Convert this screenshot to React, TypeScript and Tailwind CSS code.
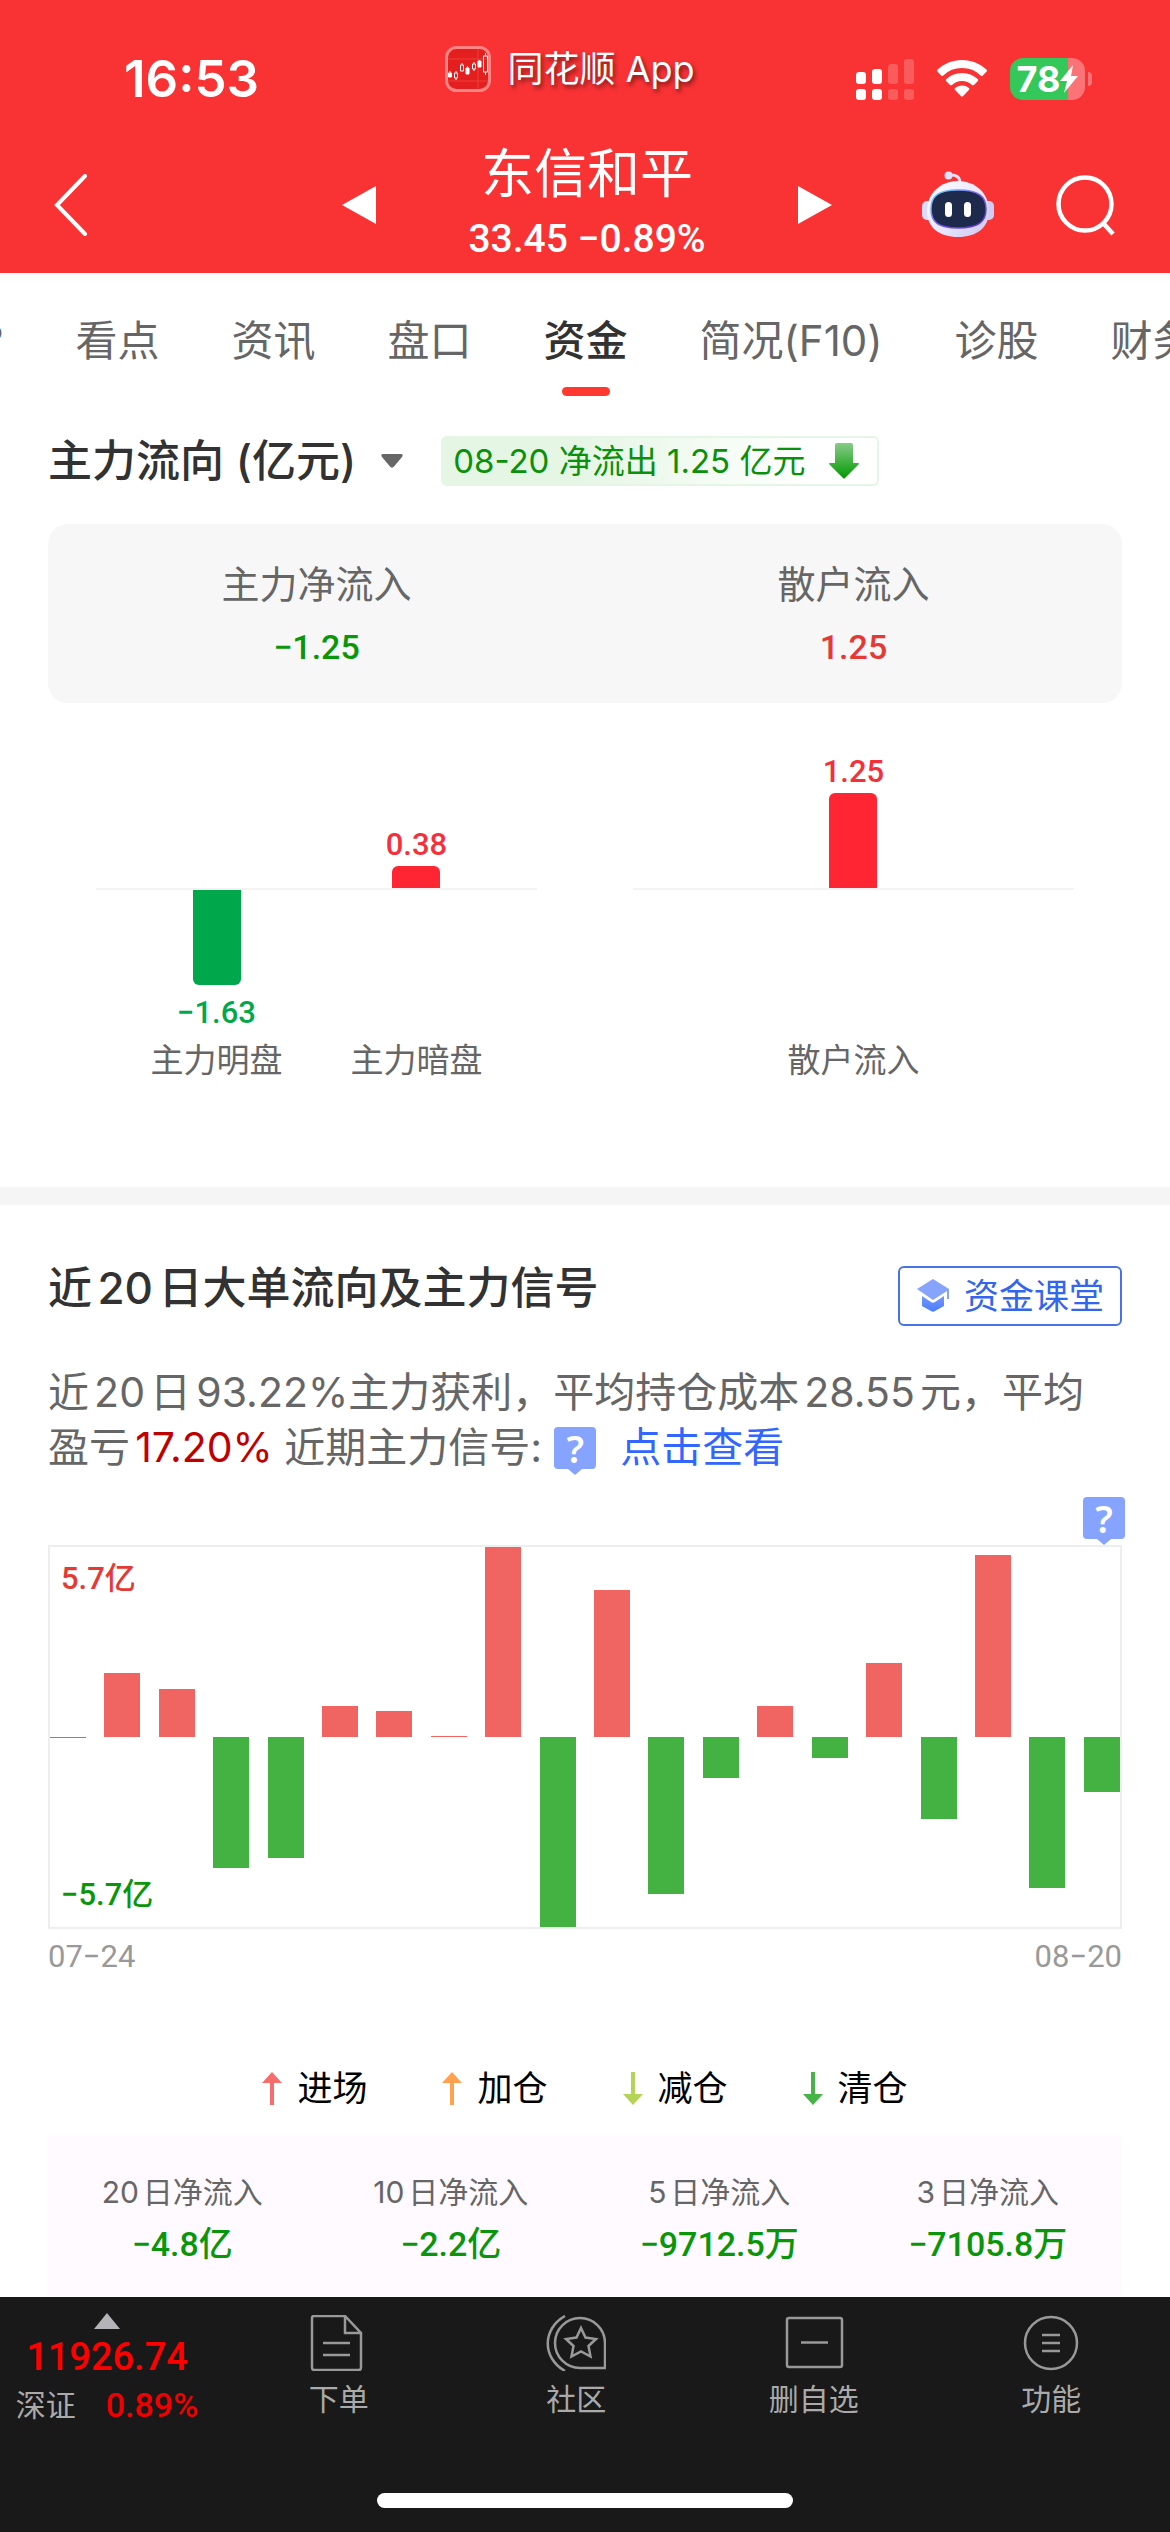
import type { ReactElement, ReactNode } from "react";
import clsx from "clsx";

const NUM = "font-[Roboto,'Noto_Sans_CJK_SC',sans-serif] font-medium [text-autospace:no-autospace]";

const tabs = ["看点", "资讯", "盘口", "资金", "简况(F10)", "诊股", "财务"];

// Daily net flow of large orders, in 亿
const dailyFlow = [
  -0.04, 1.91, 1.43, -3.93, -3.64, 0.93, 0.78, 0.03, 5.7, -5.7, 4.42, -4.72,
  -1.22, 0.93, -0.63, 2.21, -2.45, 5.46, -4.54, -1.64,
];
const maxFlow = 5.7;

const signals = [
  { label: "进场", color: "#f76c6c", up: true },
  { label: "加仓", color: "#ffa14f", up: true },
  { label: "减仓", color: "#b5d455", up: false },
  { label: "清仓", color: "#46b446", up: false },
];

const summary = [
  { label: "20日净流入", value: "−4.8亿" },
  { label: "10日净流入", value: "−2.2亿" },
  { label: "5日净流入", value: "−9712.5万" },
  { label: "3日净流入", value: "−7105.8万" },
];

const AppLogo = (): ReactElement => (
  <svg viewBox="0 0 46 46" className="size-[46px]" fill="none">
    <rect x="1.5" y="1.5" width="43" height="43" rx="10" fill="#e3201f" stroke="#ff8484" strokeWidth="3" />
    <path d="M3 13h40M3 35h40M33 3v40" stroke="#ee3c3a" />
    <g stroke="#fff">
      <path d="M5 25v2M11 25v2M11 32v2M17 17v2M22.500 20v2M29 16v2M29 23v2M34.500 14v2M40.500 7v3M40.500 26v3" />
      <path d="M9.500 27h3v5h-3zM15.500 19h3v6h-3zM27.500 18h3v5h-3zM38.500 10h4v16h-4z" />
      <path d="M3.500 27h3v4h-3zM21 22h3v6h-3zM33 15h3v6h-3z" fill="#fff" />
    </g>
  </svg>
);

const Signal = (): ReactElement => (
  <svg viewBox="0 0 58 42" className="h-[42px] w-[58px]" fill="#fff">
    <rect x="0" y="14" width="10" height="12" rx="3" />
    <rect x="16" y="11" width="10" height="15" rx="3" />
    <g opacity=".2">
      <rect x="32" y="6" width="10" height="20" rx="3" />
      <rect x="48" y="1" width="10" height="25" rx="3" />
      <rect x="32" y="31" width="10" height="11" rx="3" />
      <rect x="48" y="31" width="10" height="11" rx="3" />
    </g>
    <rect x="0" y="31" width="10" height="11" rx="3" />
    <rect x="16" y="31" width="10" height="11" rx="3" />
  </svg>
);

const Wifi = (): ReactElement => (
  <svg viewBox="0 0 50 38" className="h-[38px] w-[50px]" fill="#fff">
    <path d="M25 0C15.500 0 7 3.600.6 9.600a1.500 1.500 0 0 0 0 2.200l3.600 3.600a1.500 1.500 0 0 0 2.100 0A27 27 0 0 1 25 8a27 27 0 0 1 18.700 7.400 1.500 1.500 0 0 0 2.100 0l3.600-3.600a1.500 1.500 0 0 0 0-2.200C43 3.600 34.500 0 25 0z" />
    <path d="M25 13c-6 0-11.500 2.300-15.700 6a1.500 1.500 0 0 0 0 2.200l3.700 3.700a1.500 1.500 0 0 0 2 0 14.800 14.800 0 0 1 20 0 1.500 1.500 0 0 0 2 0l3.700-3.700a1.500 1.500 0 0 0 0-2.200A23.500 23.500 0 0 0 25 13z" />
    <path d="M25 25.500c-2.600 0-5 .9-6.900 2.400a1.300 1.300 0 0 0 0 2l6 6.300a1.300 1.300 0 0 0 1.800 0l6-6.300a1.300 1.300 0 0 0 0-2A11 11 0 0 0 25 25.500z" />
  </svg>
);

const Battery = (): ReactElement => (
  <div className="flex items-center gap-[3px]">
    <div className="flex h-[42px] w-[75px] items-center justify-center rounded-[13px] bg-linear-to-r from-[#34c759] from-78% to-[#fb7377] to-78% font-[Inter,sans-serif] text-4xl leading-[42px] font-bold text-white">
      78
      <svg viewBox="0 0 18 28" className="h-7 w-[18px]" fill="#fff">
        <path d="M13 0 0 16h7L4 28 18 11h-7z" />
      </svg>
    </div>
    <div className="h-3.5 w-1 rounded-r-full bg-[#fb7377]" />
  </div>
);

const Robot = (): ReactElement => (
  <svg viewBox="0 0 72 68" className="h-[68px] w-[72px]" fill="none">
    <defs>
      <linearGradient id="shell" x1="0" y1="0" x2="1" y2="1">
        <stop offset="0" stopColor="#fff" />
        <stop offset=".6" stopColor="#e6e3fb" />
        <stop offset="1" stopColor="#c9c6f0" />
      </linearGradient>
      <linearGradient id="rim" x1="0" y1="0" x2="1" y2="1">
        <stop offset="0" stopColor="#6fe0f5" />
        <stop offset=".5" stopColor="#7a5cf0" />
        <stop offset="1" stopColor="#5a2bd8" />
      </linearGradient>
    </defs>
    <path d="M28 4c6-.5 10 2 10 8" stroke="#e9dcf5" strokeWidth="3" />
    <circle cx="26.500" cy="4.500" r="4" fill="#e4e2fa" />
    <rect x="0" y="30" width="12" height="19" rx="5" fill="#dcdcf8" />
    <rect x="60" y="30" width="12" height="19" rx="5" fill="#cfcdf3" />
    <path d="M36 10c17 0 31 12 31 30 0 17-13 26-31 26S5 57 5 40c0-18 14-30 31-30z" fill="url(#shell)" />
    <path d="M36 19c20 0 28 6 28 19s-8 19-28 19S9 51 9 38s7-19 27-19z" fill="#1e2a4c" stroke="url(#rim)" strokeWidth="1.500" />
    <rect x="23" y="31" width="7" height="15" rx="3.500" fill="#fff" />
    <rect x="42" y="31" width="7" height="15" rx="3.500" fill="#fff" />
  </svg>
);

const HelpBubble = ({ className }: { className?: string }): ReactElement => (
  <button
    type="button"
    aria-label="帮助"
    className={clsx("inline-flex h-12 w-[42px] flex-col items-center", className)}
  >
    <span className="w-full rounded-sm bg-[#85a3ff] font-['Noto_Sans',sans-serif] text-[38px] leading-[42px] font-semibold text-white">
      ?
    </span>
    <svg viewBox="0 0 14 6" className="h-1.5 w-3.5" fill="#85a3ff">
      <path d="M0 0h14L7 6z" />
    </svg>
  </button>
);

const Header = (): ReactElement => (
  <header className="bg-[#f93234] text-white">
    <div className="grid h-[137px] grid-cols-[1fr_auto_1fr] items-center pt-5 pr-[30px]">
      <div className="pl-[124px] font-[Inter,sans-serif] text-[51px] leading-[60px] font-semibold">
        16:53
      </div>
      <div className="mb-5 flex items-center gap-4 text-4xl leading-[46px] [text-shadow:2px_3px_4px_rgb(0_0_0/0.5)]">
        <AppLogo />
        <span>同花顺 App</span>
      </div>
      <div className="flex items-center justify-end gap-[23px] pr-12">
        <Signal />
        <Wifi />
        <Battery />
      </div>
    </div>
    <div className="grid h-[136px] grid-cols-[1fr_auto_1fr] items-center">
      <button type="button" aria-label="返回" className="justify-self-start pl-[54px]">
        <svg viewBox="0 0 34 62" className="h-[62px] w-[34px]" fill="none" stroke="#fff" strokeWidth="4">
          <path d="M31 2 3 31l28 29" strokeLinecap="round" />
        </svg>
      </button>
      <div className="flex items-center justify-between gap-[92px] pl-1">
        <button type="button" aria-label="上一只">
          <svg viewBox="0 0 34 38" className="h-[38px] w-[34px]" fill="#fff">
            <path d="M34 0v38L0 19z" />
          </svg>
        </button>
        <div className="pt-1 text-center">
          <h1 className="text-[53px] leading-[64px]">东信和平</h1>
          <p className={clsx(NUM, "text-[39px] leading-[66px]")}>33.45 −0.89%</p>
        </div>
        <button type="button" aria-label="下一只">
          <svg viewBox="0 0 34 38" className="h-[38px] w-[34px]" fill="#fff">
            <path d="M0 0v38l34-19z" />
          </svg>
        </button>
      </div>
      <div className="flex items-center justify-end gap-[62px] pr-[54px]">
        <button type="button" aria-label="智能助手">
          <Robot />
        </button>
        <button type="button" aria-label="搜索">
          <svg viewBox="0 0 60 62" className="h-[62px] w-[60px]" fill="none" stroke="#fff" strokeWidth="4.500">
            <circle cx="29" cy="30" r="26.500" />
            <path d="m48 50 9 10" />
          </svg>
        </button>
      </div>
    </div>
  </header>
);

const TabBar = (): ReactElement => (
  <nav className="flex h-[123px] gap-[72px] overflow-hidden pt-[38px] text-[42px] leading-[60px] whitespace-nowrap text-[#666]">
    <a href="#ask" className="-ml-[18px] shrink-0">
      ?
    </a>
    {tabs.map((tab) => {
      const isActive = tab === "资金";

      return (
        <a
          key={tab}
          href={`#${tab}`}
          className={clsx(
            "flex shrink-0 flex-col items-center gap-4",
            isActive && "font-medium text-[#323232]",
          )}
        >
          {tab}
          {isActive && <span className="h-[9px] w-12 rounded-full bg-[#ff3830]" />}
        </a>
      );
    })}
  </nav>
);

const FlowBar = ({
  label,
  value,
  max,
}: {
  label: string;
  value: number;
  max: number;
}): ReactElement => {
  const isUp = value > 0;
  const text = `${isUp ? "" : "−"}${Math.abs(value)}`;
  const height = Math.round((Math.abs(value) / max) * 95);

  return (
    <div className="flex w-[200px] flex-col items-center">
      <div className="flex h-[185px] flex-col items-center justify-end gap-[3px]">
        {isUp && (
          <>
            <span className={clsx(NUM, "text-[31px] leading-9 text-[#f5303a]")}>{text}</span>
            <span className="w-12 rounded-t-md bg-[#ff2533]" style={{ height }} />
          </>
        )}
      </div>
      <div className="flex h-[152px] w-full flex-col items-center gap-2.5 border-t-2 border-[#f3f3f3]">
        {!isUp && (
          <>
            <span className="w-12 rounded-b-md bg-[#00a84b]" style={{ height }} />
            <span className={clsx(NUM, "text-[31px] leading-9 text-[#00a84b]")}>{text}</span>
          </>
        )}
      </div>
      <span className="text-[33px] leading-10 text-[#666]">{label}</span>
    </div>
  );
};

const FlowGroup = ({ children }: { children: ReactNode }): ReactElement => (
  <div className="flex flex-1">
    <div className="mt-[185px] h-0.5 flex-1 bg-[#f3f3f3]" />
    {children}
    <div className="mt-[185px] h-0.5 flex-1 bg-[#f3f3f3]" />
  </div>
);

const MainFlow = (): ReactElement => (
  <section className="px-12 pb-[107px]">
    <div className="mt-10 flex h-[50px] items-center">
      <button type="button" className="flex items-center gap-[25px]">
        <h2 className="text-[44px] leading-[50px] font-medium text-[#323232]">主力流向 (亿元)</h2>
        <svg viewBox="0 0 22 14" className="h-3.5 w-[22px]" fill="#666">
          <path d="M2 0h18c2 0 2 1.500 1 3l-8 9.500c-1 1.500-3 1.500-4 0L1 3C0 1.500 0 0 2 0z" />
        </svg>
      </button>
      <div className="ml-[38px] flex h-[50px] items-center gap-6 rounded-md border-2 border-[#e6f6e6] bg-linear-to-r from-[#e5f6e5] from-30% to-white to-85% px-2.5 pr-[18px] text-[33px] leading-[46px] text-[#0a900a]">
        08-20 净流出 1.25 亿元
        <svg viewBox="0 0 30 36" className="h-9 w-[30px]">
          <defs>
            <linearGradient id="down" x1="0" y1="0" x2="0" y2="1">
              <stop offset="0" stopColor="#88cc88" />
              <stop offset="1" stopColor="#009900" />
            </linearGradient>
          </defs>
          <path d="M8 0h14q2 0 2 2v18h5q2 0 0 2L16 35q-1 1-2 0L1 22q-2-2 0-2h5V2q0-2 2-2z" fill="url(#down)" />
        </svg>
      </div>
    </div>
    <div className="mt-[38px] grid grid-cols-2 rounded-[20px] bg-[#f7f7f7] pt-[38px] pb-9 text-center">
      <div>
        <p className="text-[38px] leading-11 text-[#666]">主力净流入</p>
        <p className={clsx(NUM, "mt-[21px] text-[34px] leading-10 text-[#0a960a]")}>−1.25</p>
      </div>
      <div>
        <p className="text-[38px] leading-11 text-[#666]">散户流入</p>
        <p className={clsx(NUM, "mt-[21px] text-[34px] leading-10 text-[#e53935]")}>1.25</p>
      </div>
    </div>
    <div className="flex gap-24 px-12">
      <FlowGroup>
        <FlowBar label="主力明盘" value={-1.63} max={1.63} />
        <FlowBar label="主力暗盘" value={0.38} max={1.63} />
      </FlowGroup>
      <FlowGroup>
        <FlowBar label="散户流入" value={1.25} max={1.25} />
      </FlowGroup>
    </div>
  </section>
);

const DailyChart = (): ReactElement => (
  <div>
    <div className="relative flex h-[384px] justify-between border-2 border-[#eee]">
      {dailyFlow.map((value, i) => (
        <div key={i} className="flex w-9 flex-col">
          <div className="flex h-[190px] flex-col justify-end">
            {value > 0 && (
              <div className="bg-[#f06562]" style={{ height: `${(value / maxFlow) * 100}%` }} />
            )}
          </div>
          <div className="h-[190px]">
            {value < 0 && (
              <div className="bg-[#43b243]" style={{ height: `${(-value / maxFlow) * 100}%` }} />
            )}
          </div>
        </div>
      ))}
      <span className={clsx(NUM, "absolute top-3 left-[11px] text-[31px] leading-10 text-[#e53935]")}>
        5.7亿
      </span>
      <span className={clsx(NUM, "absolute bottom-3 left-[11px] text-[31px] leading-10 text-[#0a960a]")}>
        −5.7亿
      </span>
    </div>
    <div className="mt-2 flex justify-between font-[Roboto,sans-serif] text-[31px] leading-10 text-[#999]">
      <span>07−24</span>
      <span>08−20</span>
    </div>
  </div>
);

const BigOrders = (): ReactElement => (
  <section className="border-t-[18px] border-[#f5f5f5] px-12 pt-[61px]">
    <div className="flex items-start justify-between">
      <h2 className="text-[44px] leading-11 font-medium text-[#323232]">
        近20日大单流向及主力信号
      </h2>
      <button
        type="button"
        className="flex h-[60px] items-center gap-3.5 rounded-md border-2 border-[#4a72e8] px-4 text-[35px] leading-10 text-[#3366ee]"
      >
        <svg viewBox="0 0 34 34" className="size-[34px]">
          <defs>
            <linearGradient id="cap" x1="0" y1="0" x2="0" y2="1">
              <stop offset="0" stopColor="#7396fc" />
              <stop offset="1" stopColor="#4a7dff" />
            </linearGradient>
          </defs>
          <path d="M17 0 33 10v10h-2v-8L17 21 1 10z" fill="#86a4fb" />
          <path d="M6 17v10l9 5q2 1.500 4 0l9-5V17l-9 6q-2 1.500-4 0z" fill="url(#cap)" />
        </svg>
        资金课堂
      </button>
    </div>
    <p className="mt-[39px] text-[41px] leading-[55px] text-[#666]">
      近20日93.22%主力获利，平均持仓成本28.55元，平均盈亏
      <span className="text-[#c00000]">17.20%</span> 近期主力信号:
      <HelpBubble className="-my-2 mr-6 ml-3 align-middle" />
      <a href="#signal" className="text-[#3366ff]">
        点击查看
      </a>
    </p>
    <div className="-mr-[3px] mt-[22px] flex justify-end">
      <HelpBubble />
    </div>
    <DailyChart />
    <ul className="mt-[91px] flex justify-center gap-[75px] text-[35px] leading-10 text-black">
      {signals.map(({ label, color, up }) => (
        <li key={label} className="flex items-center gap-[15px]">
          <svg viewBox="0 0 20 33" className="h-[33px] w-5" fill={color}>
            <path
              d={
                up
                  ? "M10 0 20 11h-8v22H8V11H0z"
                  : "M10 33 0 22h8V0h4v22h8z"
              }
            />
          </svg>
          {label}
        </li>
      ))}
    </ul>
    <dl className="mt-7 grid grid-cols-4 bg-[#fefaff] pt-[38px] pb-[30px] text-center">
      {summary.map(({ label, value }) => (
        <div key={label}>
          <dt className="text-[30px] leading-9 text-[#666]">{label}</dt>
          <dd className={clsx(NUM, "mt-3 text-[34px] leading-11 text-[#0a960a]")}>{value}</dd>
        </div>
      ))}
    </dl>
  </section>
);

const BarItem = ({ label, children }: { label: string; children: ReactNode }): ReactElement => (
  <button
    type="button"
    className="flex flex-col items-center gap-2.5 text-[30px] leading-9 text-[#aaa]"
  >
    <svg viewBox="0 0 60 56" className="h-14 w-[60px]" fill="none" stroke="#999" strokeWidth="2.500">
      {children}
    </svg>
    {label}
  </button>
);

const BottomBar = (): ReactElement => (
  <footer className="mt-auto bg-[#191919] pb-6">
    <div className="grid grid-cols-[220px_1fr_1fr_1fr_1fr] items-start">
      <button type="button" className="flex flex-col items-center pt-4 pr-1.5">
        <svg viewBox="0 0 26 16" className="h-4 w-[26px]" fill="#b4b4b8">
          <path d="m13 0 13 16H0z" />
        </svg>
        <span className={clsx(NUM, "mt-2.5 text-[38px] leading-9 text-[#ff0000]")}>11926.74</span>
        <span className="mt-3 flex gap-[30px] leading-9">
          <span className="text-[30px] text-[#aaa]">深证</span>
          <span className={clsx(NUM, "text-[34px] text-[#f00000]")}>0.89%</span>
        </span>
      </button>
      <div className="col-span-4 grid grid-cols-4 pt-[18px]">
        <BarItem label="下单">
          <path d="M3 3q0-2 2-2h31l16 17v34q0 3-2 3H5q-2 0-2-3zM36 1v17h16M14 28h27M14 40h27" />
        </BarItem>
        <BarItem label="社区">
          <path d="M19 1C-4 14-4 43 19 56M59 28v25H34A25 25 0 1 1 59 28z" />
          <path d="m35 13 4.500 9.500 10.500 1.500-7.500 7 2 10.500-9.500-5-9.500 5 2-10.500-7.500-7 10.500-1.500z" />
        </BarItem>
        <BarItem label="删自选">
          <rect x="3" y="3" width="55" height="49" rx="2" />
          <path d="M17 27.500h27" />
        </BarItem>
        <BarItem label="功能">
          <circle cx="30" cy="28" r="26" />
          <path d="M21 20h18M21 28h18M21 36h18" />
        </BarItem>
      </div>
    </div>
    <div className="mx-auto mt-[70px] h-[15px] w-[416px] rounded-full bg-white" />
  </footer>
);

export default function App(): ReactElement {
  return (
    <div className="flex min-h-screen flex-col bg-white font-[Inter,'Noto_Sans_CJK_SC',sans-serif] [text-autospace:normal]">
      <Header />
      <TabBar />
      <main>
        <MainFlow />
        <BigOrders />
      </main>
      <BottomBar />
    </div>
  );
}
